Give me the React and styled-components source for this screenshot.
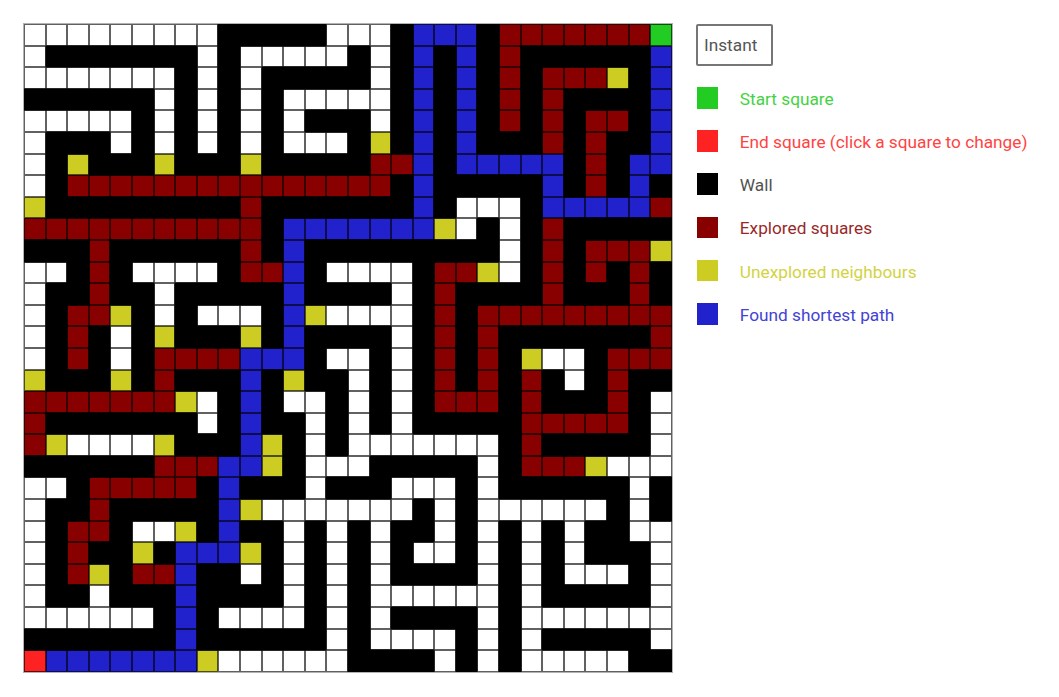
import React from 'react';
import styled, { createGlobalStyle } from 'styled-components';

const maze = [
    'WWWWWWWWW#####WWW#BBB#RRRRRRRS',
    'W#######W#WWWWW#W#B#B#R######B',
    'WWWWWWW#W#W#####W#B#B#R#RRRY#B',
    '######W#W#W#WWWWW#B#B#R#R####B',
    'WWWWW#W#W#W#W###W#B#B#R#R#RR#B',
    'W###W#W#W#W#WWW#Y#B#B###R#R##B',
    'W#Y###Y###Y#####RRB#BBBBB#R#BB',
    'W#RRRRRRRRRRRRRRR#B#####B#R#B#',
    'Y#########R#######B#WWW#BBBBBR',
    'RRRRRRRRRRR#BBBBBBBYW#W#R#####',
    '###R######R#B#########W#R#RRRY',
    'WW#R#WWWW#RRB#WWWW#RRYW#R#R#R#',
    'W##R##W#####B####W#R####R###R#',
    'W#RRY#W#WWW#BYWWWW#R#RRRRRRRRR',
    'W#R#W#Y###Y#B####W#R#R#######R',
    'W#R#W#RRRRBBB#WW#W#R#R#YWW#RRR',
    'Y###Y#R###B#Y##W#W#R#R#R#W#R##',
    'RRRRRRRYW#B#WW#W#W#RRR#R###R#W',
    'R#######W#B##W#W#W#####RRRRR#W',
    'RYWWWWY###BY#W#WWWWWWW#R#####W',
    '######RRRBBY#WWW#####W#RRRYWWW',
    'WW#RRRRR#B###W###WWW#W######W#',
    'W##R#####BYWWWWWWW#W#WWWWWW#W#',
    'W#RR#WWY#B##W#W#W##W#W#W#W##WW',
    'W#R##Y#BBBY#W#W#W#WW#W#W#W###W',
    'W#RY#RRB##W#W#W#W####W#W#WWW#W',
    'W##W###B####W#W#WWWWWW#W#####W',
    'WWWWWW#B#WWWW#W#W####W#WWWWWWW',
    '#######B######W#WWWW#W#W#####W',
    'EBBBBBBBYWWWWWW####W#W#WWWWW##',
];

const colours = {
    W: '#ffffff',
    '#': '#000000',
    R: '#880000',
    Y: '#cccc22',
    B: '#2222cc',
    S: '#22cc22',
    E: '#ff2222',
};

const legend = [
    { key: 'S', text: 'Start square', color: '#22cc22' },
    { key: 'E', text: 'End square (click a square to change)', color: '#ff2222' },
    { key: '#', text: 'Wall', color: '#333333' },
    { key: 'R', text: 'Explored squares', color: '#880000' },
    { key: 'Y', text: 'Unexplored neighbours', color: '#cccc22' },
    { key: 'B', text: 'Found shortest path', color: '#2222cc' },
];

const App = () => {
    return (
        <Page>
            <GlobalStyle />
            <Board>
                {maze.map((row, y) =>
                    row.split('').map((cell, x) => (
                        <Square key={x + '-' + y} $fill={colours[cell]} $wall={cell === '#'} />
                    ))
                )}
            </Board>
            <Side>
                <SpeedButton>Instant</SpeedButton>
                <Legend>
                    {legend.map((item) => (
                        <LegendRow key={item.key}>
                            <Swatch $fill={colours[item.key]} />
                            <LegendText $color={item.color}>{item.text}</LegendText>
                        </LegendRow>
                    ))}
                </Legend>
            </Side>
        </Page>
    );
}

const GlobalStyle = createGlobalStyle`
    html, body {
        margin: 0;
        padding: 0;
        background: #ffffff;
    }
    * {
        box-sizing: border-box;
    }
`

const Page = styled.div`
    display: flex;
    align-items: flex-start;
    gap: 24px;
    padding: 24px;
    font-family: Roboto, "Open Sans", sans-serif;
`

const Board = styled.div`
    display: grid;
    grid-template-columns: repeat(30, 21.6px);
    grid-auto-rows: 21.6px;
    width: 648px;
    flex-shrink: 0;
    overflow: hidden;
    box-shadow: 0 0 0 1px rgba(0, 0, 0, 0.3);
`

// walls sit a little above their neighbours so the grid line beside them stays black
const Square = styled.div`
    position: relative;
    z-index: ${(props) => (props.$wall ? 1 : 0)};
    background-color: ${(props) => props.$fill};
    border: 1px solid rgba(0, 0, 0, 0.62);
    box-shadow: ${(props) => (props.$wall ? '0 0 0 0.6px #000000' : 'none')};
`

const Side = styled.div`
    display: flex;
    flex-direction: column;
    align-items: flex-start;
`

const SpeedButton = styled.button`
    width: 77px;
    height: 41.6px;
    background: #ffffff;
    border: 2px solid #767676;
    border-radius: 2px;
    color: #555555;
    font-family: inherit;
    font-size: 17.25px;
    text-align: left;
    padding: 0 0 0 6px;
`

const Legend = styled.div`
    display: flex;
    flex-direction: column;
    margin-top: 10.6px;
`

const LegendRow = styled.div`
    display: flex;
    align-items: center;
    height: 43.2px;
`

const Swatch = styled.div`
    width: 21.6px;
    height: 21.6px;
    margin-left: 0.6px;
    background-color: ${(props) => props.$fill};
`

const LegendText = styled.span`
    margin-left: 21.6px;
    padding-top: 2px;
    font-size: 17.25px;
    color: ${(props) => props.$color};
    opacity: 0.85;
`

export default App;
